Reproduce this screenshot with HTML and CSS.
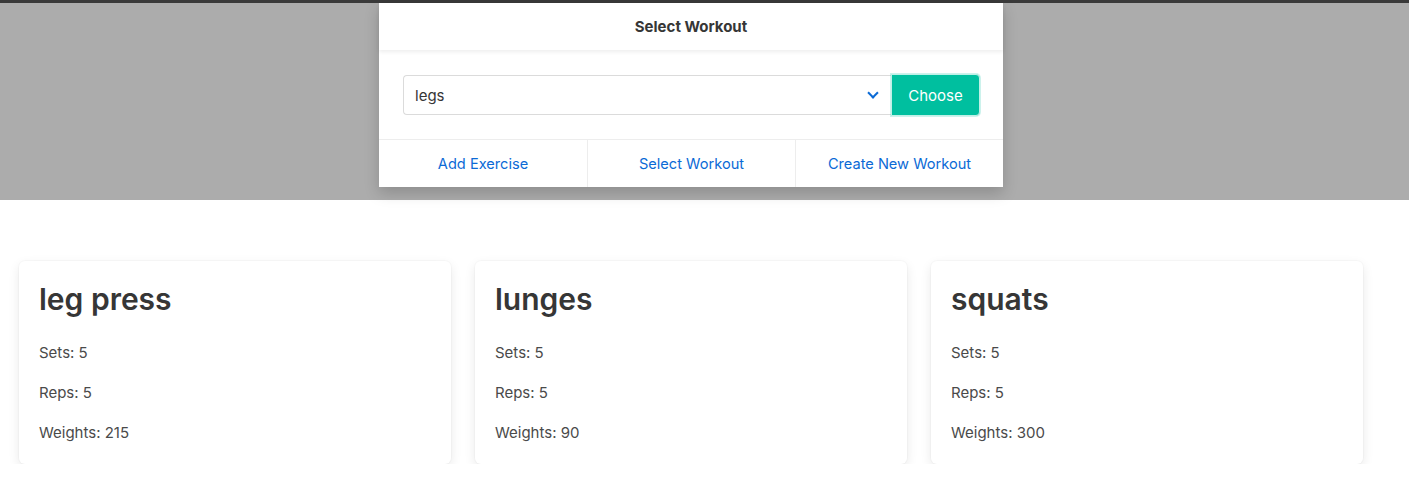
FILE: index.html
```html
<!DOCTYPE html>
<html>
<head>
<meta charset="utf-8">
<link rel="stylesheet" href="styles.css">
</head>
<body>
<div class="overlay">
  <div class="modal">
    <header class="modal-head">Select Workout</header>
    <section class="modal-body">
      <div class="field">
        <div class="select">
          <span class="select-value">legs</span>
          <span class="chevron"></span>
        </div>
        <button class="btn">Choose</button>
      </div>
    </section>
    <footer class="modal-foot">
      <a class="foot-link">Add Exercise</a>
      <a class="foot-link">Select Workout</a>
      <a class="foot-link">Create New Workout</a>
    </footer>
  </div>
</div>
<main class="cards">
  <div class="card">
    <h2 class="card-title">leg press</h2>
    <p class="card-line">Sets: 5</p>
    <p class="card-line">Reps: 5</p>
    <p class="card-line">Weights: 215</p>
  </div>
  <div class="card">
    <h2 class="card-title">lunges</h2>
    <p class="card-line">Sets: 5</p>
    <p class="card-line">Reps: 5</p>
    <p class="card-line">Weights: 90</p>
  </div>
  <div class="card">
    <h2 class="card-title">squats</h2>
    <p class="card-line">Sets: 5</p>
    <p class="card-line">Reps: 5</p>
    <p class="card-line">Weights: 300</p>
  </div>
</main>
</body>
</html>
```

FILE: styles.css
```css
* { box-sizing: border-box; }
body {
  margin: 0;
  font-family: Inter, "Noto Sans", sans-serif;
  color: #363636;
  background: #fff;
}
.overlay {
  height: 200px;
  background: #acacac;
  border-top: 3px solid #3a3a3a;
  display: flex;
  justify-content: center;
  padding-right: 27px;
}
.modal {
  width: 624px;
  height: 184px;
  background: #fff;
  display: flex;
  flex-direction: column;
  box-shadow: 0 6px 14px rgba(0,0,0,0.18);
}
.modal-head {
  height: 47px;
  display: flex;
  align-items: center;
  justify-content: center;
  font-weight: 700;
  font-size: 15px;
  color: #363636;
  box-shadow: 0 2px 4px rgba(0,0,0,0.07);
  position: relative;
}
.modal-body {
  padding: 24px 23px 23px 24px;
  flex: 1;
}
.field {
  display: flex;
  align-items: center;
}
.select {
  width: 488px;
  height: 40px;
  border: 1px solid #dbdbdb;
  border-right: none;
  border-radius: 4px 0 0 4px;
  display: flex;
  align-items: center;
  justify-content: space-between;
  padding: 0 14px 0 11px;
  font-size: 15px;
  color: #363636;
}
.chevron {
  width: 8px;
  height: 8px;
  border-left: 2.5px solid #0b6ad6;
  border-bottom: 2.5px solid #0b6ad6;
  transform: rotate(-45deg);
  margin-top: -5px;
}
.btn {
  width: 89px;
  height: 42px;
  background: #00bf9f;
  color: #fff;
  border: 1px solid #bff0e6;
  border-radius: 0 4px 4px 0;
  font-family: inherit;
  font-size: 15px;
  padding: 0;
  box-shadow: 0 0 0 1px rgba(0,191,159,0.2);
}
.modal-foot {
  height: 48px;
  border-top: 1px solid #ededed;
  display: grid;
  grid-template-columns: 1fr 1fr 1fr;
}
.foot-link {
  display: flex;
  align-items: center;
  justify-content: center;
  color: #0b6ad6;
  font-size: 14.6px;
}
.foot-link + .foot-link {
  border-left: 1px solid #ededed;
}
.cards {
  display: flex;
  gap: 24px;
  padding: 61px 19px 0 19px;
}
.card {
  width: 432px;
  height: 203px;
  background: #fff;
  border-radius: 6px;
  padding: 20px 20px;
  box-shadow: 0 4px 12px rgba(10,10,10,0.09), 0 0 0 1px rgba(10,10,10,0.02);
}
.card-title {
  margin: 0 0 24px 0;
  font-size: 30px;
  font-weight: 600;
  line-height: 36px;
  color: #363636;
}
.card-line {
  margin: 0 0 16px 0;
  font-size: 15px;
  line-height: 24px;
  color: #4a4a4a;
}
```
